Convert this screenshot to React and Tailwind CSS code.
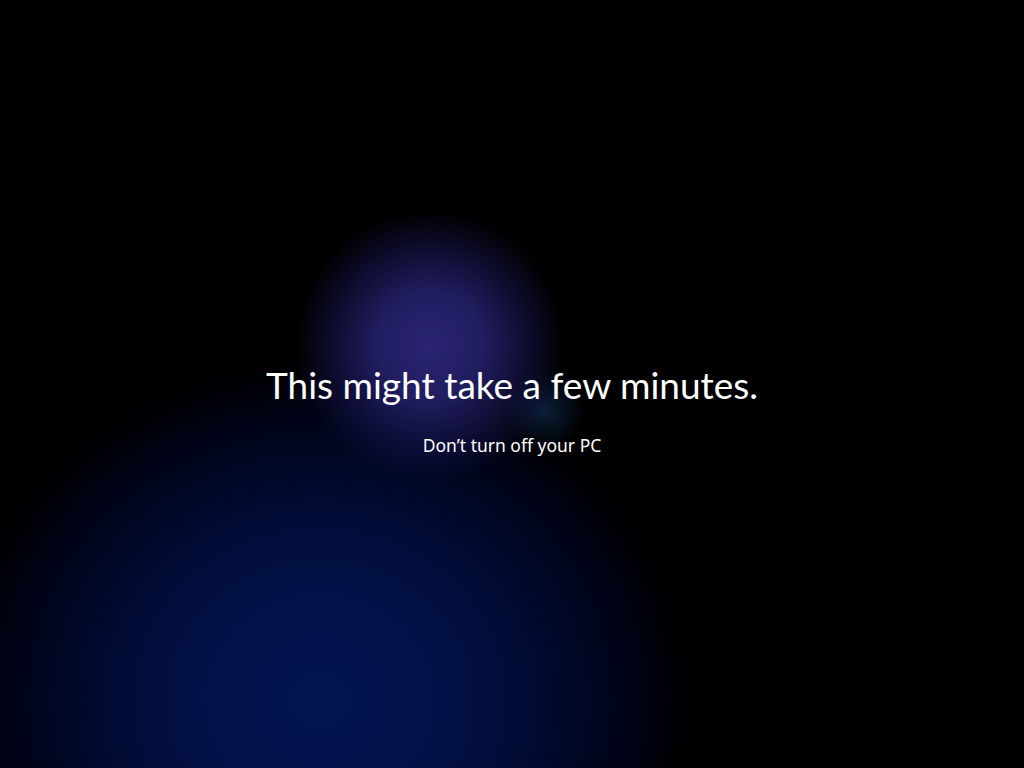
export default function App() {
  return (
    <div className="w-[1024px] h-[768px] overflow-hidden bg-black bg-[radial-gradient(circle_135px_at_430px_345px,#2a2472_0%,rgba(38,34,112,0.85)_40%,rgba(26,24,92,0.45)_75%,rgba(0,0,0,0)_100%),radial-gradient(circle_40px_at_545px_410px,rgba(18,60,110,0.5)_0%,rgba(0,0,0,0)_100%),radial-gradient(ellipse_370px_340px_at_320px_700px,#021550_0%,#02124a_30%,#010b33_58%,#00041a_80%,#000000_100%)] flex flex-col items-center pt-[361px] text-white">
      <h1 className="text-[37px] leading-[48px] font-normal [font-family:'Lato','Noto_Sans',sans-serif]">This might take a few minutes.</h1>
      <p className="mt-[24px] text-[17.5px] leading-[24px] [font-family:'Noto_Sans','Open_Sans',sans-serif]">Don’t turn off your PC</p>
    </div>
  );
}
